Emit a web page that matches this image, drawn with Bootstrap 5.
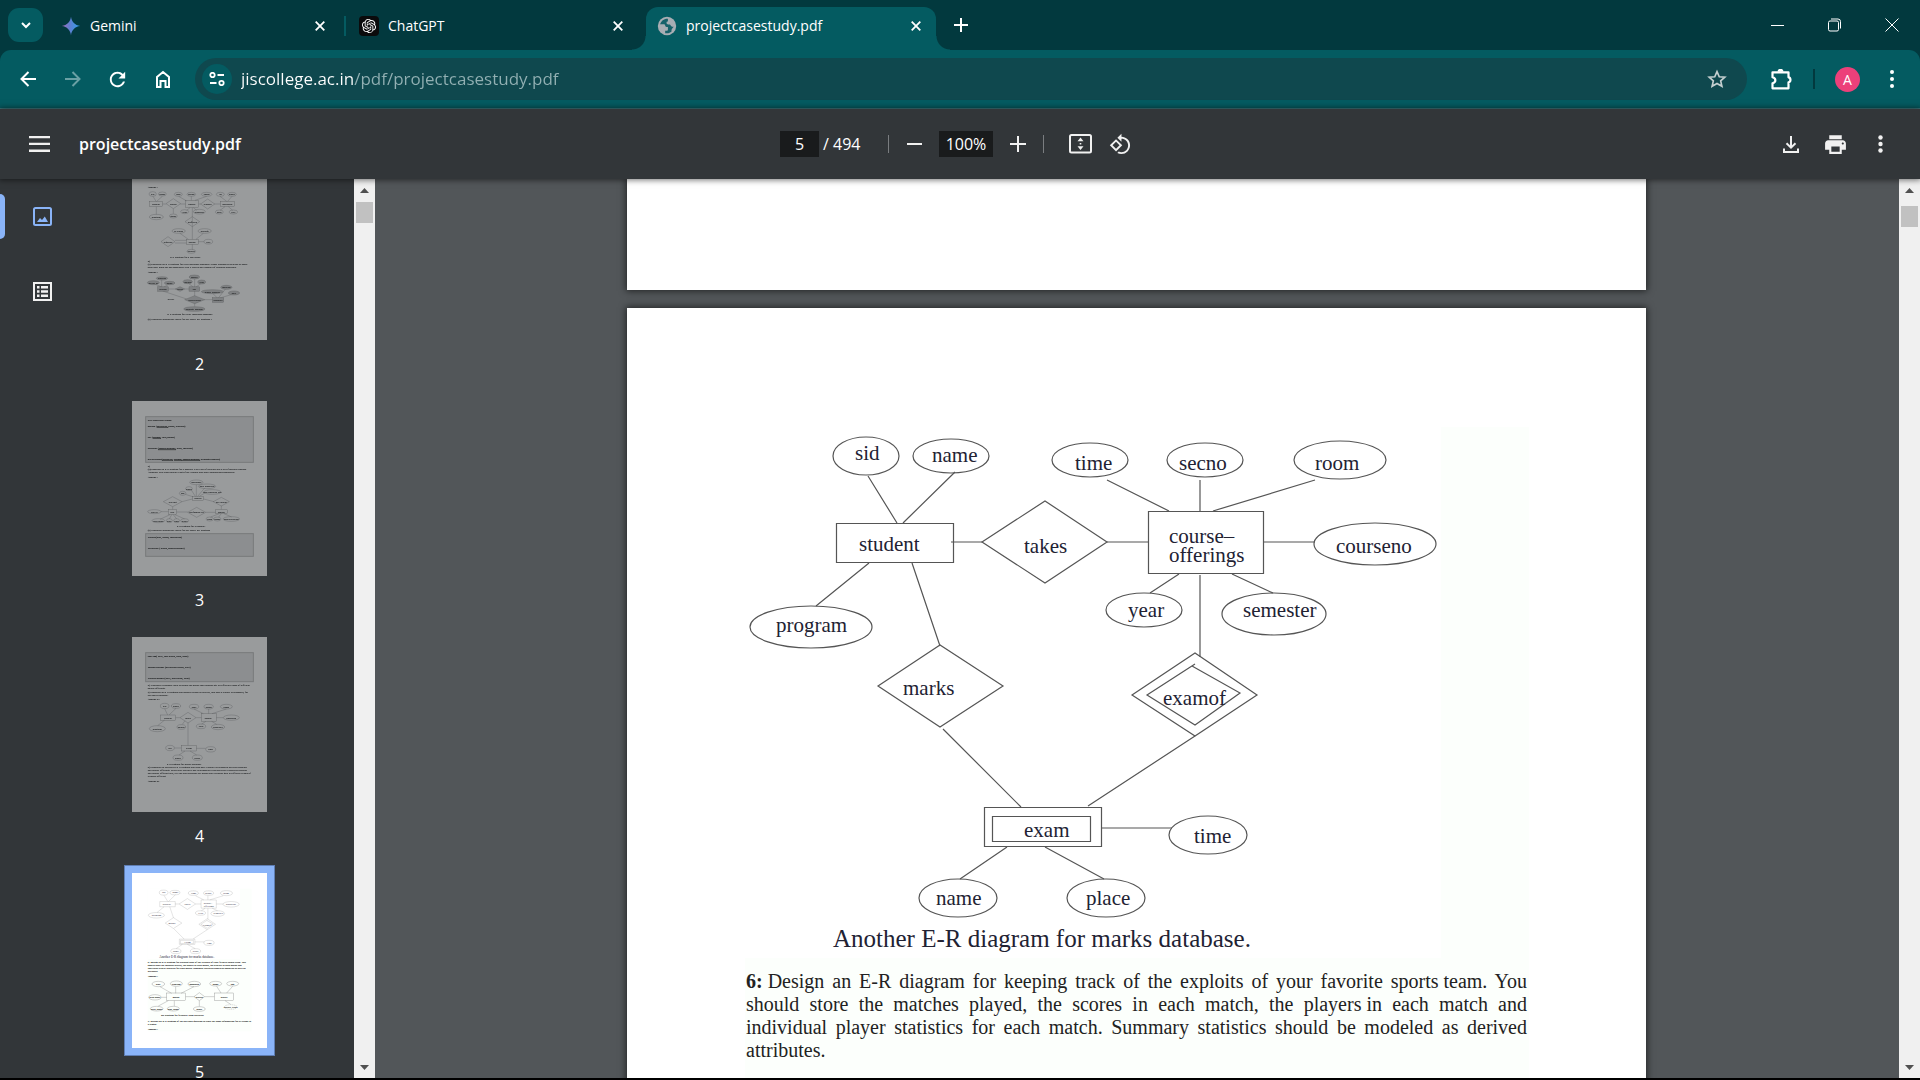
<!DOCTYPE html>
<html lang="en">
<head>
<meta charset="utf-8">
<meta name="viewport" content="width=device-width, initial-scale=1">
<title>projectcasestudy.pdf</title>
<link rel="stylesheet" href="https://cdn.jsdelivr.net/npm/bootstrap@5.3.0/dist/css/bootstrap.min.css">
<style>
:root{--strip:#02393e;--bar:#045b61;--omni:#0f484e;--panel:#323639;--desk:#525659;--blue:#8ab4f8}
body{font-family:"Open Sans","Noto Sans",sans-serif;font-size:16px;color:#fff;background:#000;padding-bottom:2px}
button.ico{background:none;border:0;padding:0;color:#fff;display:inline-flex;align-items:center;justify-content:center;flex:none}
svg{display:block;flex:none}
.strip{background:var(--strip);height:50px}
.tabsearch{width:35px;height:34px;border-radius:11px;background:var(--bar)!important;margin-left:8px}
.tabset{margin-left:7px;gap:8px}
.tab{width:290px;height:43px;padding:0 9px 6px 11px;position:relative;font-size:14px;flex:0 1 auto;min-width:0}
.tab a{color:#fff;text-decoration:none;flex:1;min-width:0}
.tab .fav{width:20px;height:20px;margin-right:9px;display:flex;align-items:center;justify-content:center;flex:none}
.tab .ico{width:22px;height:22px}
.tab.on{background:var(--bar);border-radius:12px 12px 0 0}
.tab.on::before,.tab.on::after{content:"";position:absolute;bottom:0;width:14px;height:14px}
.tab.on::before{left:-14px;background:radial-gradient(circle at 0 0,transparent 13px,var(--bar) 14px)}
.tab.on::after{right:-14px;background:radial-gradient(circle at 100% 0,transparent 13px,var(--bar) 14px)}
.tab.split::after{content:"";position:absolute;right:-6px;top:9px;width:2px;height:20px;background:var(--bar)}
.newtab{width:50px;height:43px}
.win{width:57px;height:50px}
.toolwrap{background:var(--strip)}
.toolbar{background:var(--bar);height:59px;border-radius:11px 11px 0 0;border-bottom:1px solid #3f7c82;padding:0 10px 0 5px}
.toolbar .nav-ico{width:45px;height:45px}
.omni{background:var(--omni);height:42px;border-radius:21px;margin-left:10px;padding:0 12px 0 7px}
.site{width:30px;height:30px;border-radius:50%;background:var(--bar)!important}
.omni input{flex:1;min-width:0;border:0;outline:0;margin-left:9px;padding:0;font-size:17px;color:transparent;background:linear-gradient(90deg,#fff 112px,#92b0b3 112px);-webkit-background-clip:text;background-clip:text}
.w36{width:36px;height:36px}
.vline{width:2px;height:20px;background:var(--strip);margin-left:14px;margin-right:20px}
.ava{width:25px;height:25px;border-radius:50%;background:#ec407a!important;font-size:14px;line-height:25px;margin-right:14px}
.pdfbar{background:var(--panel);height:70px;box-shadow:0 0 6px 1px rgba(0,0,0,.55);z-index:2;position:relative;padding:0 17px}
.wing{flex:1 1 0}
.pdfbar .b45{width:45px;height:45px}
.pdfbar .b50{width:50px;height:40px}
.pdfbar .b40{width:40px;height:40px}
.pdfbar input{background:#191b1c;border:0;color:#fff;text-align:center;height:26px;padding:0;outline:0}
.pg{width:39px}.zm{width:54px}.total{width:41px;white-space:nowrap}
.tick{width:1px;height:18px;background:#7a7d80}
.title{font-weight:600;margin-left:17px}
.side{background:var(--panel);width:354px;flex:none}
.rail{width:85px;padding-top:15px}
.rail .ico{width:85px;height:45px;margin-bottom:30px;position:relative;color:#f1f1f1}
.rail .on{color:var(--blue)}
.rail .on::before{content:"";position:absolute;left:0;top:0;width:5px;height:45px;border-radius:0 5px 5px 0;background:var(--blue)}
.thumbs{padding-right:40px;margin-top:-14px}
.thumb{width:135px;display:block;color:#fff;text-decoration:none;text-align:center;margin-bottom:25px}
.thumb>svg{width:135px;height:175px;background:#fff;opacity:.5}
.thumb.on>svg{opacity:1;box-shadow:0 0 0 7px var(--blue),0 0 0 8px #5f7eb3}
.thumb span{display:block;line-height:24px;margin-top:12px}
.sbar{width:21px;background:#f0f0f0;flex:none;padding:9px 0 8px;z-index:1}
.sbar i{width:17px;height:21px;background:#c1c1c1;display:block}
.desk{background:var(--desk);padding-right:1px}
.sheet{width:100%;max-width:1019px;background:#fff;box-shadow:0 0 7px 1px rgba(0,0,0,.6);flex:none}
.tail{height:111px;margin-bottom:18px}
.full{padding:119px 117px 300px 118px}
.tint{background:#fcfffc;padding-bottom:300px}
.tint p{font:20px/23px "Liberation Serif",serif;color:#222;text-align:justify;margin:12px 2px 0 1px}
.er{fill:none;stroke:#555;stroke-width:1.2}
.er text,.er .cap{font-family:"Liberation Serif",serif;font-size:21px;fill:#223;stroke:none}
.er .cap{font-size:25px}
.mini{fill:none;stroke:#777;stroke-width:1}
.mini text{font-family:"Liberation Serif",serif;font-size:8px;fill:#111;stroke:#111;stroke-width:.2}
.mini .bx{fill:#e6e6e6;stroke:#bbb;stroke-width:3}
</style>
</head>
<body class="vh-100 d-flex flex-column overflow-hidden">

<header>
<div class="strip d-flex align-items-center">
  <button class="ico tabsearch" aria-label="Search tabs"><svg width="12" height="12" viewBox="0 0 12 12" fill="none" stroke="#fff" stroke-width="2"><path d="M2 4l4 4 4-4"/></svg></button>
  <nav class="tabset d-flex align-self-end flex-shrink-1" aria-label="Tabs">
    <div class="tab split d-flex align-items-center">
      <span class="fav"><svg width="20" height="20" viewBox="0 0 24 24"><defs><linearGradient id="gm"><stop offset="0" stop-color="#a56cb8"/><stop offset=".45" stop-color="#5c80d2"/><stop offset="1" stop-color="#2fa0e8"/></linearGradient></defs><path fill="url(#gm)" d="M12 1c.8 6.200 4.800 10.200 11 11-6.200.8-10.200 4.800-11 11-.8-6.200-4.800-10.200-11-11 6.200-.8 10.200-4.800 11-11z"/></svg></span>
      <a href="#" class="text-truncate">Gemini</a>
      <button class="ico" aria-label="Close tab"><svg width="10" height="10" viewBox="0 0 10 10" stroke="#fff" stroke-width="1.8"><path d="M.7.7l8.600 8.600M9.300.7L.7 9.300"/></svg></button>
    </div>
    <div class="tab d-flex align-items-center">
      <span class="fav"><svg width="20" height="20" viewBox="-5 -5 34 34"><rect x="-5" y="-5" width="34" height="34" rx="7" fill="#0b0b0c"/><path fill="#fff" d="M22.2819 9.8211a5.9847 5.9847 0 0 0-.5157-4.9108 6.0462 6.0462 0 0 0-6.5098-2.9A6.0651 6.0651 0 0 0 4.9807 4.1818a5.9847 5.9847 0 0 0-3.9977 2.9 6.0462 6.0462 0 0 0 .7427 7.0966 5.98 5.98 0 0 0 .511 4.9107 6.051 6.051 0 0 0 6.5146 2.9001A5.9847 5.9847 0 0 0 13.2599 24a6.0557 6.0557 0 0 0 5.7718-4.2058 5.9894 5.9894 0 0 0 3.9977-2.9001 6.0557 6.0557 0 0 0-.7475-7.0729zm-9.022 12.6081a4.4755 4.4755 0 0 1-2.8764-1.0408l.1419-.0804 4.7783-2.7582a.7948.7948 0 0 0 .3927-.6813v-6.7369l2.02 1.1686a.071.071 0 0 1 .038.0615v5.5826a4.504 4.504 0 0 1-4.4945 4.4944zm-9.6607-4.1254a4.4708 4.4708 0 0 1-.5346-3.0137l.142.0852 4.783 2.7582a.7712.7712 0 0 0 .7806 0l5.8428-3.3685v2.3324a.0804.0804 0 0 1-.0332.0615L9.74 19.9502a4.4992 4.4992 0 0 1-6.1408-1.6464zM2.3408 7.8956a4.485 4.485 0 0 1 2.3655-1.9728V11.6a.7664.7664 0 0 0 .3879.6765l5.8144 3.3543-2.0201 1.1685a.0757.0757 0 0 1-.071 0l-4.8303-2.7865A4.504 4.504 0 0 1 2.3408 7.872zm16.5963 3.8558L13.1038 8.364 15.1192 7.2a.0757.0757 0 0 1 .071 0l4.8303 2.7913a4.4944 4.4944 0 0 1-.6765 8.1042v-5.6772a.79.79 0 0 0-.407-.667zm2.0107-3.0231l-.142-.0852-4.7735-2.7818a.7759.7759 0 0 0-.7854 0L9.409 9.2297V6.8974a.0662.0662 0 0 1 .0284-.0615l4.8303-2.7866a4.4992 4.4992 0 0 1 6.6802 4.66zM8.3065 12.863l-2.02-1.1638a.0804.0804 0 0 1-.038-.0567V6.0742a4.4992 4.4992 0 0 1 7.3757-3.4537l-.142.0805L8.704 5.459a.7948.7948 0 0 0-.3927.6813zm1.0976-2.3654l2.602-1.4998 2.6069 1.4998v2.9994l-2.5974 1.4997-2.6067-1.4997Z"/></svg></span>
      <a href="#" class="text-truncate">ChatGPT</a>
      <button class="ico" aria-label="Close tab"><svg width="10" height="10" viewBox="0 0 10 10" stroke="#fff" stroke-width="1.8"><path d="M.7.7l8.600 8.600M9.300.7L.7 9.300"/></svg></button>
    </div>
    <div class="tab on d-flex align-items-center">
      <span class="fav"><svg width="22" height="22" viewBox="0 0 24 24"><circle cx="12" cy="12" r="10" fill="#a8adb3"/><path fill="#17616a" d="M11 4.200c-3 .6-5.500 2.800-6.600 5.800h4.100c1 0 1.500.7 1.500 1.500 0 1 .7 1.500 1.500 1.500H13v3c0 .8-.6 1.200-1.500 1.200H10v2.600c1.200.3 2.400.3 3.500 0 1.300-.3 2.500-.9 3.500-1.800-.3-1-.2-2 .5-3l1.800-2.200c-1.500.3-2.600-.2-3.300-1.300l-.7-1.200h-1.800c-1.300 0-2-.8-2-1.800S11.700 7 13 7V4.100c-.7-.1-1.300 0-2 .1z"/></svg></span>
      <a href="#" class="text-truncate" aria-current="page">projectcasestudy.pdf</a>
      <button class="ico" aria-label="Close tab"><svg width="10" height="10" viewBox="0 0 10 10" stroke="#fff" stroke-width="1.800"><path d="M.7.7l8.600 8.600M9.300.7L.7 9.300"/></svg></button>
    </div>
  </nav>
  <button class="ico newtab" aria-label="New tab"><svg width="14" height="14" viewBox="0 0 14 14" stroke="#fff" stroke-width="2"><path d="M7 0v14M0 7h14"/></svg></button>
  <div class="ms-auto d-flex">
    <button class="ico win" aria-label="Minimize"><svg width="13" height="13" viewBox="0 0 13 13"><path d="M0 6h13v1H0z" fill="#fff"/></svg></button>
    <button class="ico win" aria-label="Restore"><svg width="14" height="14" viewBox="0 0 14 14" fill="none" stroke="#fff"><rect x=".5" y="3" width="10" height="10" rx="1.500"/><path d="M3 1h7a2.500 2.500 0 0 1 2.500 2.500v7"/></svg></button>
    <button class="ico win" aria-label="Close"><svg width="14" height="14" viewBox="0 0 14 14" stroke="#fff"><path d="M.5.5l13 13M13.500.5l-13 13"/></svg></button>
  </div>
</div>

<div class="toolwrap">
<div class="toolbar d-flex align-items-center">
  <button class="ico nav-ico" aria-label="Back"><svg width="16" height="16" viewBox="0 0 16 16" fill="none" stroke="#fff" stroke-width="2"><path d="M16 8H2M8.500 1L1.500 8l7 7"/></svg></button>
  <button class="ico nav-ico" aria-label="Forward"><svg width="16" height="16" viewBox="0 0 16 16" fill="none" stroke="#6aa0a4" stroke-width="2"><path d="M0 8h14M7.500 1l7 7-7 7"/></svg></button>
  <button class="ico nav-ico" aria-label="Reload"><svg width="23" height="23" viewBox="0 0 24 24"><path fill="#fff" d="M17.650 6.350C16.200 4.900 14.210 4 12 4c-4.420 0-7.990 3.580-7.990 8s3.570 8 7.990 8c3.730 0 6.840-2.550 7.730-6h-2.080c-.82 2.330-3.040 4-5.650 4-3.310 0-6-2.690-6-6s2.690-6 6-6c1.660 0 3.140.69 4.220 1.780L13 11h7V4l-2.350 2.350z"/></svg></button>
  <button class="ico nav-ico" aria-label="Home"><svg width="16" height="18" viewBox="0 0 16 18" fill="none" stroke="#fff" stroke-width="2"><path d="M2 17V7L8 2l6 5v10h-3.500v-6h-5v6z"/></svg></button>
  <div class="omni d-flex align-items-center flex-fill">
    <button class="ico site" aria-label="Site information"><svg width="16" height="14" viewBox="0 0 16 14" fill="none" stroke="#fff" stroke-width="1.800"><circle cx="3.500" cy="3" r="2.200"/><path d="M8.500 3H15M1 11h6.500"/><circle cx="12.500" cy="11" r="2.200"/></svg></button>
    <input type="text" aria-label="Address" value="jiscollege.ac.in/pdf/projectcasestudy.pdf">
    <button class="ico w36" aria-label="Bookmark"><svg width="20" height="20" viewBox="0 0 24 24" fill="none" stroke="#c4cfd0" stroke-width="2"><path d="M12 3.200l2.700 6.100 6.700.6-5 4.400 1.500 6.500-5.900-3.500-5.900 3.500 1.500-6.500-5-4.400 6.700-.6z"/></svg></button>
  </div>
  <button class="ico w36 ms-3" aria-label="Extensions"><svg width="21" height="21" viewBox="0 0 21 21" fill="none" stroke="#fff" stroke-width="2.200"><path d="M1.500 3.300h16v5c2.600.3 2.600 4.800 0 5v6h-16v-5c3.800-.9 3.800-5.100 0-6z" stroke-linejoin="round"/><path d="M6.500 2.800a3 3 0 0 1 6 0z" fill="#fff" stroke="none"/></svg></button>
  <span class="vline"></span>
  <button class="ico ava" aria-label="Profile">A</button>
  <button class="ico w36" aria-label="Menu"><svg width="4" height="18" viewBox="0 0 4 18" fill="#fff"><circle cx="2" cy="2" r="2"/><circle cx="2" cy="9" r="2"/><circle cx="2" cy="16" r="2"/></svg></button>
</div>
</div>
</header>

<div class="pdfbar d-flex align-items-center flex-shrink-0">
  <div class="wing d-flex align-items-center">
    <button class="ico b45" aria-label="Toggle sidebar"><svg width="21" height="16" viewBox="0 0 21 16" fill="#f1f1f1"><path d="M0 0h21v2.300H0zM0 6.800h21v2.300H0zM0 13.600h21v2.300H0z"/></svg></button>
    <span class="title">projectcasestudy.pdf</span>
  </div>
  <div class="d-flex align-items-center">
    <input class="pg" type="text" value="5" aria-label="Page number"><span class="total ms-1">/ 494</span>
    <span class="tick ms-4"></span>
    <button class="ico b50" aria-label="Zoom out"><svg width="15" height="2" viewBox="0 0 15 2"><path fill="#f1f1f1" d="M0 0h15v2H0z"/></svg></button>
    <input class="zm" type="text" value="100%" aria-label="Zoom level">
    <button class="ico b50" aria-label="Zoom in"><svg width="16" height="16" viewBox="0 0 16 16" fill="#f1f1f1"><path d="M7 0h2v7h7v2H9v7H7V9H0V7h7z"/></svg></button>
    <span class="tick me-3"></span>
    <button class="ico b40" aria-label="Fit to page"><svg width="23" height="20" viewBox="0 0 23 20"><rect x="1" y="1" width="21" height="17.500" rx="1.500" fill="none" stroke="#f1f1f1" stroke-width="2"/><path fill="#f1f1f1" d="M11.500 3.500l3 3.800h-6zM11.500 16l3-3.800h-6zM10.700 8.900h1.600v1.600h-1.600z"/></svg></button>
    <button class="ico b40" aria-label="Rotate"><svg width="23" height="23" viewBox="0 0 24 24" fill="#f1f1f1"><path d="M7.340 6.410L.86 12.900l6.490 6.480 6.490-6.480-6.500-6.490zM3.690 12.900l3.660-3.660L11 12.900l-3.660 3.660-3.650-3.660zm15.670-6.260C17.610 4.880 15.300 4 13 4V.76L8.760 5 13 9.240V6c1.790 0 3.580.68 4.950 2.050 2.730 2.730 2.730 7.170 0 9.900C16.580 19.320 14.790 20 13 20c-.97 0-1.940-.21-2.840-.61l-1.490 1.490C10.020 21.620 11.510 22 13 22c2.300 0 4.610-.88 6.360-2.640 3.520-3.510 3.520-9.210 0-12.720z"/></svg></button>
  </div>
  <div class="wing d-flex justify-content-end">
    <button class="ico b45" aria-label="Download"><svg width="16" height="17" viewBox="0 0 16 17" fill="none" stroke="#f1f1f1" stroke-width="2"><path d="M8 0v11M3.500 7.200L8 11.700l4.500-4.500M1 12.500V16h14v-3.500"/></svg></button>
    <button class="ico b45" aria-label="Print"><svg width="25" height="25" viewBox="0 0 24 24" fill="#f1f1f1"><path d="M19 8H5c-1.660 0-3 1.340-3 3v6h4v4h12v-4h4v-6c0-1.660-1.340-3-3-3zm-3 11H8v-5h8v5zm3-7c-.55 0-1-.45-1-1s.45-1 1-1 1 .45 1 1-.45 1-1 1zm-1-9H6v4h12V3z"/></svg></button>
    <button class="ico b45" aria-label="More actions"><svg width="5" height="18" viewBox="0 0 5 18" fill="#f1f1f1"><circle cx="2.500" cy="2.500" r="2.200"/><circle cx="2.500" cy="9" r="2.200"/><circle cx="2.500" cy="15.500" r="2.200"/></svg></button>
  </div>
</div>

<div class="d-flex flex-fill overflow-hidden">
  <aside class="side d-flex overflow-hidden">
    <div class="rail d-flex flex-column">
      <button class="ico on" aria-label="Thumbnails"><svg width="19" height="19" viewBox="0 0 19 19"><rect x="1" y="1" width="17" height="17" rx="1.500" fill="none" stroke="currentColor" stroke-width="2"/><path fill="currentColor" d="M4 15l3-4 2 2 2.800-3.500L15 15z"/></svg></button>
      <button class="ico" aria-label="Document outline"><svg width="19" height="19" viewBox="0 0 19 19"><rect x="1" y="1" width="17" height="17" fill="none" stroke="currentColor" stroke-width="2"/><path fill="currentColor" d="M4 4h2.500v2.500H4zM8 4h7v2.500H8zM4 8.200h2.500v2.500H4zM8 8.200h7v2.500H8zM4 12.500h2.500V15H4zM8 12.500h7V15H8z"/></svg></button>
    </div>
    <nav class="thumbs d-flex flex-column align-items-center flex-fill" aria-label="Pages">
      <a class="thumb" href="#"><svg id="t2" class="mini" viewBox="396 -18 405 525" role="img" aria-label="Page 2"></svg><span>2</span></a>
      <a class="thumb" href="#"><svg id="t3" class="mini" viewBox="36 33 405 525" role="img" aria-label="Page 3"></svg><span>3</span></a>
      <a class="thumb" href="#"><svg id="t4" class="mini" viewBox="36 51 405 525" role="img" aria-label="Page 4"></svg><span>4</span></a>
      <a class="thumb on" href="#" aria-current="page"><svg id="t5" class="mini" viewBox="66 69 405 525" role="img" aria-label="Page 5"></svg><span>5</span></a>
    </nav>
  </aside>
  <div class="sbar d-flex flex-column align-items-center">
    <svg width="9" height="5" viewBox="0 0 9 5"><path fill="#505050" d="M0 5l4.500-5L9 5z"/></svg><i style="margin-top:9px"></i>
    <svg class="mt-auto" width="9" height="5" viewBox="0 0 9 5"><path fill="#505050" d="M0 0l4.500 5L9 0z"/></svg>
  </div>
  <main class="desk flex-fill d-flex flex-column align-items-center overflow-hidden">
    <section class="sheet tail" aria-label="Page 4"></section>
    <section class="sheet full" aria-label="Page 5">
      <div class="tint">
        <svg class="w-100 h-auto" viewBox="745 427 784 531" role="img" aria-label="E-R diagram for marks database">
          <rect x="745" y="427" width="696" height="531" fill="#fff"/>
          <g id="marks" class="er">
            <path d="M868 476L897 523M955 472L903 523M1107 480L1169 511M1200 480V511M1315 480L1213 511M951 542H982M1107 542H1148M1263 542H1315M869 563L816 606M912 563L940 646M943 729L1021 807M1179 574L1150 593M1232 574L1273 593M1200 575V657M1195 736L1088 806M1101 828H1172M1007 847L960 879M1045 847L1104 879"/>
            <path d="M982 542L1045 501L1107 542L1045 583zM878 686L940 645L1003 686L940 727zM1132 695L1195 653L1257 695L1195 736zM1195 664L1147 695L1195 725L1240 693L1192 666"/>
            <path d="M836.500 523.500h117v39h-117zM1148.500 511.500h115v62h-115zM984.500 807.500h117v39h-117zM992.500 816.500h98v25h-98z"/>
            <ellipse cx="866" cy="456" rx="33" ry="19"/><ellipse cx="951" cy="456" rx="38" ry="17"/><ellipse cx="1090" cy="460" rx="38" ry="17"/><ellipse cx="1205" cy="460" rx="38" ry="17"/><ellipse cx="1340" cy="460" rx="46" ry="19"/><ellipse cx="1375" cy="544" rx="61" ry="21"/><ellipse cx="811" cy="627" rx="61" ry="21"/><ellipse cx="1144" cy="610" rx="38" ry="17"/><ellipse cx="1274" cy="614" rx="52" ry="21"/><ellipse cx="1208" cy="835" rx="39" ry="19"/><ellipse cx="958" cy="898" rx="39" ry="19"/><ellipse cx="1106" cy="898" rx="39" ry="19"/>
            <text x="855" y="460">sid</text><text x="932" y="462">name</text><text x="1075" y="470">time</text><text x="1179" y="470">secno</text><text x="1315" y="470">room</text>
            <text x="859" y="551">student</text><text x="1024" y="553">takes</text><text x="1169" y="543">course–</text><text x="1169" y="562">offerings</text><text x="1336" y="553">courseno</text>
            <text x="776" y="632">program</text><text x="1128" y="617">year</text><text x="1243" y="617">semester</text><text x="903" y="695">marks</text><text x="1163" y="705">examof</text>
            <text x="1024" y="837">exam</text><text x="1194" y="843">time</text><text x="936" y="905">name</text><text x="1086" y="905">place</text>
            <text class="cap" x="833" y="947">Another E-R diagram for marks database.</text>
          </g>
        </svg>
        <p><span class="d-inline-block"><b>6:</b> Design</span> an E-R diagram for keeping track of the exploits of your favorite <span class="d-inline-block">sports team.</span> You should store the matches played, the scores in each match, the <span class="d-inline-block">players in</span> each match and individual player statistics for each match. Summary statistics should be modeled as derived attributes.</p>
      </div>
    </section>
  </main>
  <div class="sbar d-flex flex-column align-items-center">
    <svg width="9" height="5" viewBox="0 0 9 5"><path fill="#505050" d="M0 5l4.500-5L9 5z"/></svg><i style="margin-top:13px"></i>
    <svg class="mt-auto" width="9" height="5" viewBox="0 0 9 5"><path fill="#505050" d="M0 0l4.500 5L9 0z"/></svg>
  </div>
</div>

<script src="https://cdn.jsdelivr.net/npm/bootstrap@5.3.0/dist/js/bootstrap.bundle.min.js"></script>
<script>
// Builders for the page thumbnails
const label=(x,y,t)=>t?`<text x="${x}" y="${y+3}" text-anchor="middle">${t}</text>`:'';
const E=(x,y,rx,ry,t)=>`<ellipse cx="${x}" cy="${y}" rx="${rx}" ry="${ry}"/>`+label(x,y,t);
const R=(x,y,w,h,t)=>`<rect x="${x-w/2}" y="${y-h/2}" width="${w}" height="${h}"/>`+label(x,y,t);
const D=(x,y,rx,ry,t)=>`<path d="M${x-rx} ${y}L${x} ${y-ry}L${x+rx} ${y}L${x} ${y+ry}z"/>`+label(x,y,t);
const L=d=>`<path d="${d}"/>`;
const T=(x,y,t,b)=>`<text x="${x}" y="${y}"${b?' font-weight="bold"':''}>${t}</text>`;
const B=(x,y,w,h)=>`<rect class="bx" x="${x}" y="${y}" width="${w}" height="${h}"/>`;
const put=(id,...a)=>document.getElementById(id).innerHTML=a.join('');

put('t2',T(443,51,'Answer :',1),
 L('M459 76L468 91M487 76L470 91M488 99H498M541 99H557M596 99H603M643 99H661M469 107V131M520 113V128M536 76L560 90M574 76V88M620 76L585 88M560 118L570 110M590 118L580 110M660 76L680 91M696 76L683 91M675 107L660 118M685 107L698 118M577 110V205M540 187L565 205M610 187L588 205M525 208H560M525 216H560M595 212H612M577 220V236'),
 E(458,69,11,7,'sid'),E(487,69,12,6,'name'),E(535,70,12,6,'time'),E(574,70,13,6,'secno'),E(620,70,16,6,'room'),E(661,70,12,6,'iid'),E(696,70,13,6,'name'),
 R(468,99,40,15,'student'),D(520,98,22,15,'enrols'),R(576,99,38,22,'course'),D(623,99,21,15,'teaches'),R(682,99,42,15,'instructor'),
 E(469,138,21,8,'program'),E(520,135,12,6,'grade'),E(554,122,12,6,'year'),E(598,122,18,7,'semester'),E(658,123,12,6,'dept'),E(700,123,13,6,'title'),
 D(577,152,22,15,'isoffered'),E(536,180,20,7,'syllabus'),E(614,180,20,7,'prereqs'),D(504,212,21,15,'requires'),R(577,213,36,15,'course'),E(625,212,13,7,'title'),E(574,241,13,6,'credits'),
 T(510,261,'E-R diagram for a university'),T(443,273,'2)',1),T(443,282,'(a) Construct an E-R diagram for a car insurance company whose customers own one or more'),T(443,291,'cars each. Each car has associated with it zero to any number of recorded accidents.'),T(443,306,'Answer :',1),
 L('M485 325V348M462 338L485 348M510 338L492 348M506 354H530M553 354H568M584 322V378M565 337L580 348M604 337L588 348M488 360L560 384M612 386H637M636 365L652 381M678 352L655 381M700 369L660 381M584 396V407'),
 '<g fill="#ccc">',E(486,322,17,5,'address'),E(460,335,18,6,'driver-id'),E(509,336,16,5,'name'),E(583,318,16,6,'model'),E(563,332,14,6,'license'),E(605,333,12,6,'year'),R(489,354,32,13,'person'),D(540,354,14,7,'owns'),R(583,354,32,13,'car'),E(637,362,33,6,'report-number'),E(679,349,17,6,'location'),E(702,366,17,6,'date'),D(584,386,30,12,'participated'),R(654,387,34,14,'accident'),E(583,414,32,7,'damage-amount'),'</g>',label(513,385,'driver'),
 T(502,432,'E-R diagram for a Car-insurance company.'),T(443,447,'(b) Construct appropriate tables for the above ER Diagram ?'));

put('t3',B(77,80,323,137),T(83,93,'Car insurance tables:',1),T(83,110,'person (driver-id, name, address)',1),T(83,144,'car (license, year,model)',1),T(83,177,'accident (report-number, date, location)',1),T(83,210,'participated(driver-id, license, report-number, damage-amount)',1),
 '<path stroke="#000" stroke-width="2" d="M111 112h34M99 145h24M114 179h54M126 211h33M162 211h78"/>',
 T(83,231,'3)',1),T(83,240,'(a)Construct an E-R diagram for a hospital with a set of patients and a set of medical doctors.'),T(83,249,'Associate with each patient a log of the various tests and examinations conducted.'),T(83,264,'Answer :',1),
 L('M229 284V319M254 294L233 319M214 300L226 319M196 313L218 320M256 308L238 319M217 327L186 335M251 327L282 335M158 350V358M304 347V358M123 365H145M170 366H203M257 367H287M150 374L120 388M155 374L148 387M160 374L170 387M165 374L194 387M298 371L272 381M304 371L296 381M312 371L335 381'),
 E(229,277,20,7,'insurance'),E(261,289,26,7,'date-admitted'),E(207,296,10,6,'name'),E(188,310,10,6,'ssn'),E(277,306,26,7,'date-checked-out'),R(234,325,34,12,'patient'),D(158,335,28,15,'test log'),D(304,335,24,13,'Dr-Patient'),E(103,365,20,6,'test-id'),R(157,366,24,16,'test'),D(230,367,27,15,'performed-by'),R(304,365,36,11,'doctor'),
 E(115,392,19,6,'test name'),E(148,392,9,6,'date'),E(170,392,9,6,'time'),E(194,392,12,6,'result'),E(269,387,11,6,'dssn'),E(292,387,11,6,'name'),E(334,387,25,7,'specialization'),
 T(170,412,'E-R diagram for a hospital.'),T(83,423,'(b) Construct appropriate tables for the above ER Diagram'),B(77,431,323,68),T(83,444,'Patient(SSn, name, insurance)',1),T(83,477,'Physician ( name, specialization)',1));

put('t4',B(77,98,323,87),T(83,111,'Test log( SSN, test name, date, time)',1),T(83,144,'Doctor-patient (physician-name, SSN)',1),T(83,177,'Patient-history(SSN, test name, date)',1),
 T(83,198,'5): Consider a database used to record the marks that students get in different exams of different'),T(83,207,'course offerings.'),T(83,219,'a) Construct an E-R diagram that models exams as entities, and uses a ternary relationship, for'),T(83,228,'the above database.'),T(83,241,'Answer a.:',1),
 L('M134 266L143 285M168 265L147 285M167 293H180M228 293H244M289 293H310M222 267L250 281M266 267V281M319 267L276 281M134 300L113 317M195 302L187 313M258 304L245 312M275 304L290 313M204 308V376M163 384H184M229 385H257M195 393L177 405M210 393L230 405'),
 E(134,258,13,8,'sid'),E(168,258,14,7,'name'),E(222,260,14,7,'time'),E(266,260,14,7,'secno'),E(319,260,18,7,'room'),R(144,293,46,16,'student'),D(204,293,24,16,'takes'),R(266,293,45,24,'course-'),E(334,293,24,8,'courseno'),E(112,326,24,9,'program'),E(184,321,13,7,'marks'),E(243,319,14,7,'year'),E(294,321,20,8,'semester'),E(150,384,13,8,'eid'),R(207,385,45,16,'exam'),E(272,388,15,8,'time'),E(174,413,15,8,'name'),E(232,413,15,8,'place'),
 T(140,436,'E-R diagram for marks database.'),T(83,444,'b) Construct an alternative E-R diagram that uses only a binary relationship between students'),T(83,453,'and course-offerings. Make sure that only one relationship exists between a particular student'),T(83,462,'and course-offering pair, yet you can represent the marks that a student gets in different exams of'),T(83,471,'a course offering.'),T(83,486,'Answer b:',1));

const small=['6: Design an E-R diagram for keeping track of the exploits of your favorite sports team. You','should store the matches played, the scores in each match, the players in each match and','individual player statistics for each match. Summary statistics should be modeled as derived','attributes.'];
put('t5','<rect x="113" y="116" width="312" height="428" fill="#fcfffc" stroke="none"/><rect x="113" y="116" width="277" height="211" fill="#fff" stroke="none"/>',
 '<svg x="66" y="69" width="405" height="525" viewBox="627 308 1019 1321"><use href="#marks"/></svg>',
 ...small.map((s,i)=>T(113,339+i*9,s)),T(113,381,'Answer :',1),
 L('M150 410L185 430M197 410V430M252 410L213 430M227 440H253M285 440H313M155 442H170M175 452L145 468M193 452V468M268 452V469M320 409L333 429M368 409L350 429M345 452L362 463'),
 E(145,402,19,8,'date'),E(199,401,18,8,'stadium'),E(253,402,19,8,'opponent'),E(317,401,18,7,'name'),E(368,401,18,7,'age'),R(198,440,57,22,'match'),D(268,440,16,12,'played'),R(342,440,58,22,'player'),E(135,442,19,8,'own score'),E(140,476,19,7,'own_score'),E(190,476,18,7,'opp_score'),E(268,477,18,7,'score'),'<g stroke-dasharray="3 3">',E(362,471,19,7,'season_score'),'</g>',
 T(153,499,'ER diagram for favourite team statistics.'),T(113,515,'7: Extend the E-R diagram of the previous question to track the same information for all teams in'),T(113,524,'a league.'),T(113,541,'Answer :',1));
</script>
</body>
</html>
